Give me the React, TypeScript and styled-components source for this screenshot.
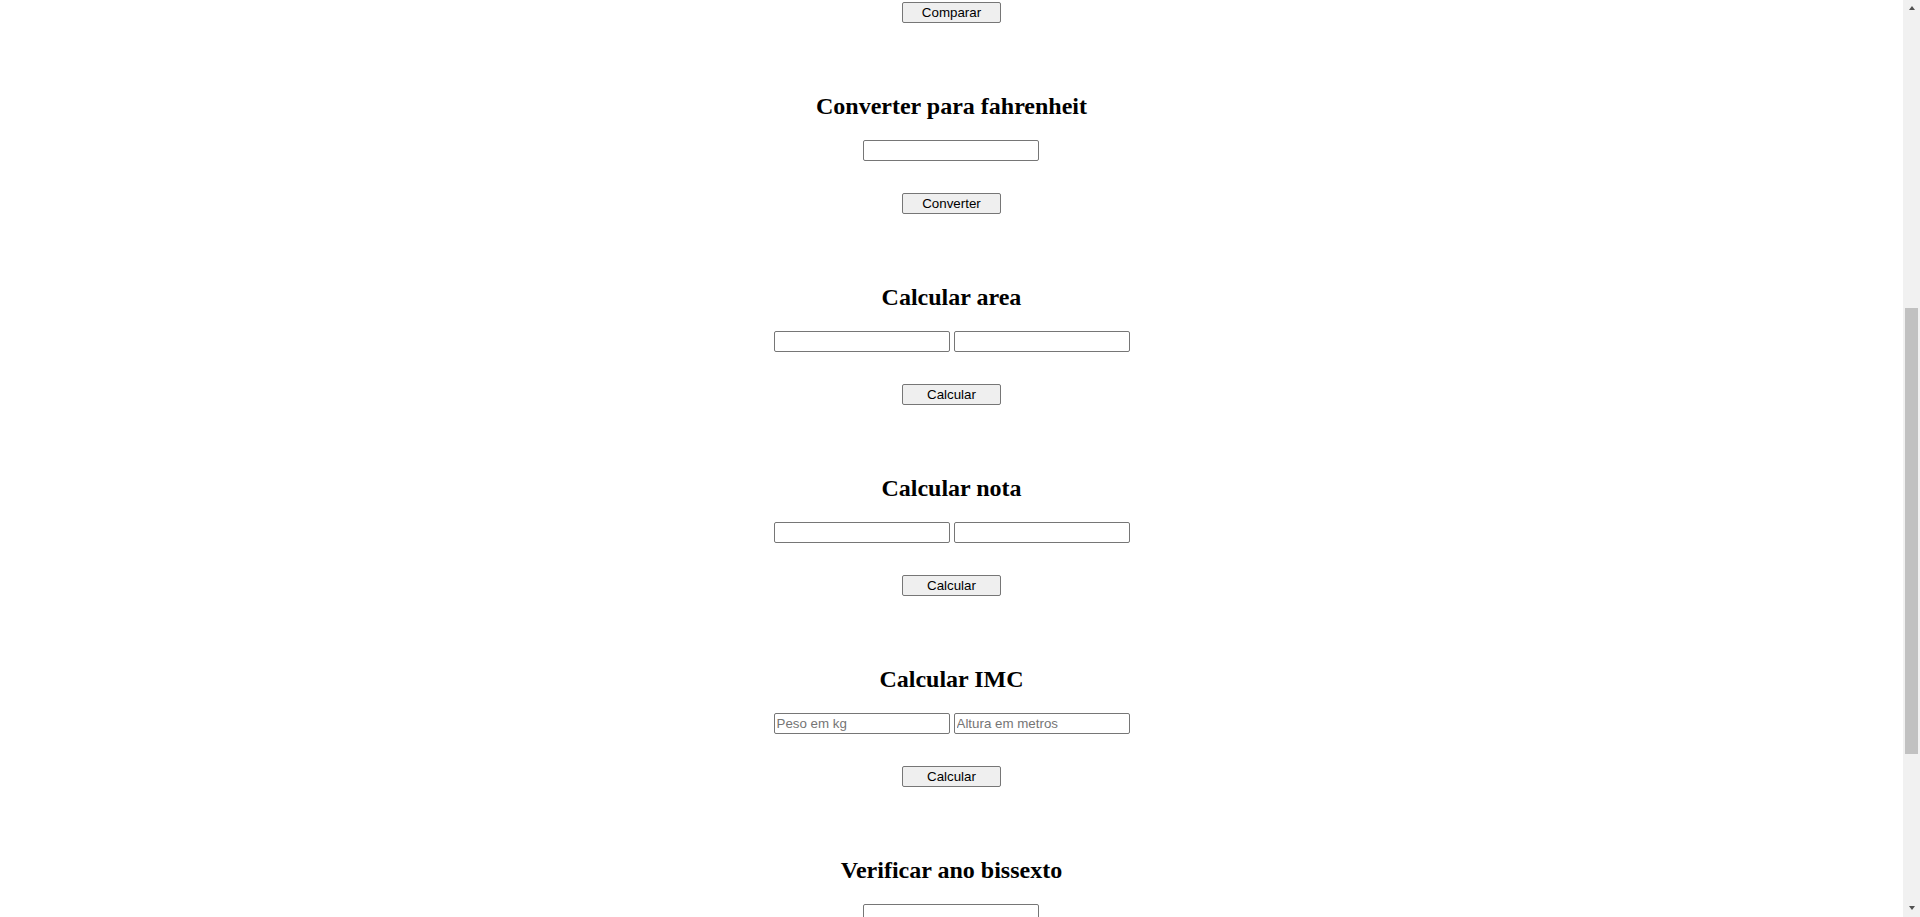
import React, { useLayoutEffect, useRef, useState } from "react";
import styled, { createGlobalStyle } from "styled-components";

const GlobalStyle = createGlobalStyle`
  html {
    scrollbar-width: none;
  }
  html::-webkit-scrollbar {
    display: none;
  }
  body {
    margin: 0;
    background: #ffffff;
    color: #000000;
    font-family: "Liberation Serif", "Times New Roman", serif;
  }
`;

const sections = [
  { title: "Somar números", fields: ["", ""], action: "Somar" },
  { title: "Verificar par ou ímpar", fields: [""], action: "Verificar" },
  { title: "Maior número", fields: ["", ""], action: "Comparar" },
  { title: "Converter para fahrenheit", fields: [""], action: "Converter" },
  { title: "Calcular area", fields: ["", ""], action: "Calcular" },
  { title: "Calcular nota", fields: ["", ""], action: "Calcular" },
  { title: "Calcular IMC", fields: ["Peso em kg", "Altura em metros"], action: "Calcular" },
  { title: "Verificar ano bissexto", fields: [""], action: "Verificar" },
  { title: "Calcular fatorial", fields: [""], action: "Calcular" },
];

// the screenshot shows the page scrolled so that this button sits at the top
const ANCHOR = 2;
const BAR = 17;

const Page = styled.main`
  width: calc(100% - ${BAR}px);
  display: flex;
  flex-direction: column;
  align-items: center;
  gap: 68px;
  padding: 115.4px 0 47px;
`;

const Section = styled.section`
  display: flex;
  flex-direction: column;
  align-items: center;
`;

const Title = styled.h2`
  margin: 0;
  padding-top: 1.5px;
  font-family: "Liberation Serif", "Times New Roman", serif;
  font-size: 24px;
  font-weight: bold;
  line-height: 27.6px;
`;

const Fields = styled.div`
  display: flex;
  gap: 4px;
  margin-top: 19.9px;
`;

const Input = styled.input`
  box-sizing: border-box;
  width: 176px;
  height: 21px;
  padding: 1px 2px;
  border: 1px solid #767676;
  border-radius: 2px;
  background: #ffffff;
  font-family: "Liberation Sans", Arial, sans-serif;
  font-size: 13.333px;
  color: #000000;
  outline: none;

  &::placeholder {
    color: #757575;
  }
`;

const Button = styled.button`
  box-sizing: border-box;
  width: 99px;
  height: 21px;
  margin-top: 32px;
  padding: 1px 6px;
  border: 1px solid #767676;
  border-radius: 2px;
  background: #efefef;
  font-family: "Liberation Sans", Arial, sans-serif;
  font-size: 13.333px;
  color: #000000;
  cursor: pointer;
`;

/* window scrollbar, drawn since the headless browser hides its own */
const ScrollBar = styled.div`
  position: fixed;
  top: 0;
  right: 0;
  width: ${BAR}px;
  height: 100vh;
  background: #f1f1f1;
  display: flex;
  flex-direction: column;
`;

const Arrow = styled.div<{ $down?: boolean }>`
  height: ${BAR}px;
  display: flex;
  justify-content: center;
  align-items: ${(p) => (p.$down ? "flex-start" : "flex-end")};
  padding: ${(p) => (p.$down ? "6px 0 0" : "0 0 7px")};
  box-sizing: border-box;

  &::before {
    content: "";
    width: 0;
    height: 0;
    border-left: 3.5px solid transparent;
    border-right: 3.5px solid transparent;
    ${(p) => (p.$down ? "border-top" : "border-bottom")}: 4px solid #505050;
  }
`;

const Track = styled.div`
  position: relative;
  flex: 1;
`;

const Thumb = styled.div`
  position: absolute;
  left: 2px;
  right: 2px;
  background: #c1c1c1;
`;

export default function App() {
  const anchorRef = useRef<HTMLButtonElement>(null);
  const [thumb, setThumb] = useState({ top: 291, height: 446 });

  useLayoutEffect(() => {
    const el = anchorRef.current;
    if (!el) return;
    const top = el.getBoundingClientRect().top + window.scrollY;
    window.scrollTo(0, top - 2);

    const docH = document.documentElement.scrollHeight;
    const viewH = window.innerHeight;
    const trackH = viewH - BAR * 2;
    const height = Math.max(20, (trackH * viewH) / docH);
    const max = docH - viewH;
    const pos = max > 0 ? ((trackH - height) * window.scrollY) / max : 0;
    setThumb({ top: pos, height });
  }, []);

  return (
    <>
      <GlobalStyle />
      <Page>
        {sections.map((s, i) => (
          <Section key={i}>
            <Title>{s.title}</Title>
            <Fields>
              {s.fields.map((ph, j) => (
                <Input key={j} type="text" placeholder={ph} />
              ))}
            </Fields>
            <Button ref={i === ANCHOR ? anchorRef : undefined}>{s.action}</Button>
          </Section>
        ))}
      </Page>
      <ScrollBar>
        <Arrow />
        <Track>
          <Thumb style={{ top: thumb.top, height: thumb.height }} />
        </Track>
        <Arrow $down />
      </ScrollBar>
    </>
  );
}
